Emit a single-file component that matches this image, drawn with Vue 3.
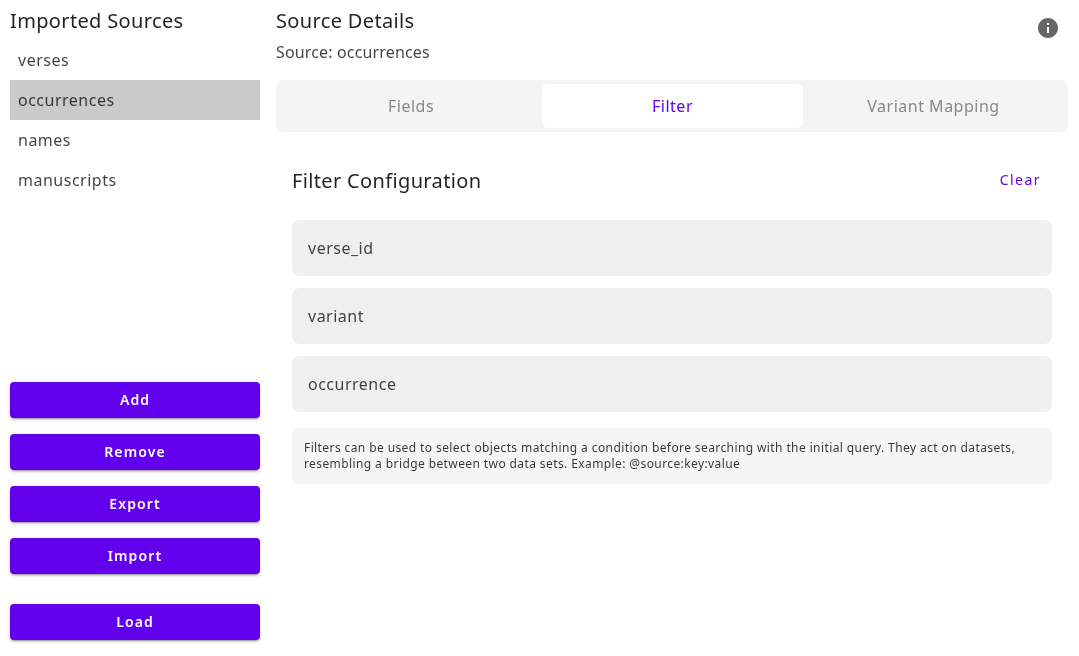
<script setup>
const sources = ['verses', 'occurrences', 'names', 'manuscripts']
const tabs = ['Fields', 'Filter', 'Variant Mapping']
const fields = ['verse_id', 'variant', 'occurrence']
const actions = ['Add', 'Remove', 'Export', 'Import']
</script>

<template>
  <div class="app">
    <aside class="side">
      <h2 class="title">Imported Sources</h2>
      <ul class="list">
        <li v-for="s in sources" :key="s" class="item" :class="{ selected: s === 'occurrences' }">{{ s }}</li>
      </ul>
      <div class="actions">
        <button v-for="a in actions" :key="a" class="btn">{{ a }}</button>
      </div>
      <button class="btn load">Load</button>
    </aside>
    <main class="main">
      <div class="head">
        <div>
          <h2 class="title">Source Details</h2>
          <div class="sub">Source: occurrences</div>
        </div>
        <svg class="info" viewBox="0 0 24 24" width="24" height="24">
          <path fill="#666" d="M12 2C6.48 2 2 6.48 2 12s4.48 10 10 10 10-4.48 10-10S17.52 2 12 2zm1 15h-2v-6h2v6zm0-8h-2V7h2v2z" />
        </svg>
      </div>
      <div class="tabs">
        <div v-for="t in tabs" :key="t" class="tab" :class="{ active: t === 'Filter' }">{{ t }}</div>
      </div>
      <section class="panel">
        <div class="panel-head">
          <h2 class="title">Filter Configuration</h2>
          <span class="clear">Clear</span>
        </div>
        <div class="rows">
          <div v-for="f in fields" :key="f" class="row">{{ f }}</div>
        </div>
        <p class="note">Filters can be used to select objects matching a condition before searching with the initial query. They act on datasets, resembling a bridge between two data sets. Example: @source:key:value</p>
      </section>
    </main>
  </div>
</template>

<style>
html, body { margin: 0; background: #fff; }
</style>

<style scoped>
.app {
  display: flex;
  height: 656px;
  box-sizing: border-box;
  padding: 0 11px 0 10px;
  gap: 16px;
  font-family: "Noto Sans", sans-serif;
  color: rgba(0, 0, 0, 0.87);
  overflow: hidden;
  will-change: transform;
}
.side {
  width: 250px;
  flex: none;
  display: flex;
  flex-direction: column;
  padding: 5px 0 16px;
  box-sizing: border-box;
}
.title {
  margin: 0;
  font-size: 20px;
  font-weight: 400;
  line-height: 32px;
  letter-spacing: 0.35px;
}
.list {
  list-style: none;
  margin: 3px 0 0;
  padding: 0;
}
.item {
  height: 40px;
  line-height: 40px;
  padding-left: 8px;
  font-size: 16px;
  letter-spacing: 0.5px;
  color: rgba(0, 0, 0, 0.74);
}
.item.selected { background: #cacaca; }
.actions {
  margin-top: auto;
  display: flex;
  flex-direction: column;
  gap: 16px;
}
.btn {
  display: block;
  width: 100%;
  height: 36px;
  border: 0;
  border-radius: 4px;
  background: #6200ee;
  color: #fff;
  font-family: inherit;
  font-size: 14px;
  font-weight: 600;
  letter-spacing: 1.1px;
  padding: 0 0 2px;
  box-shadow: 0 3px 1px -2px rgba(0,0,0,.2), 0 2px 2px 0 rgba(0,0,0,.14), 0 1px 5px 0 rgba(0,0,0,.12);
}
.load { margin-top: 30px; }
.main { flex: 1; min-width: 0; padding-top: 5px; }
.head { display: flex; justify-content: space-between; }
.sub {
  font-size: 16px;
  line-height: 20px;
  letter-spacing: 0.15px;
  margin-top: 5px;
  color: rgba(0, 0, 0, 0.74);
}
.info { margin: 11px 8px 0 0; }
.tabs {
  margin-top: 18px;
  height: 52px;
  box-sizing: border-box;
  padding: 4px;
  display: grid;
  grid-template-columns: 262px 261px 261px;
  background: #f4f4f4;
  border-radius: 8px;
}
.tab {
  display: flex;
  align-items: center;
  justify-content: center;
  border-radius: 6px;
  font-size: 16px;
  letter-spacing: 0.5px;
  color: #888;
}
.tab.active { background: #fff; color: #6200ee; }
.panel { padding: 33px 16px 0; }
.panel-head {
  display: flex;
  justify-content: space-between;
  align-items: center;
  padding-right: 11px;
}
.clear {
  color: #6200ee;
  font-size: 14px;
  font-weight: 400;
  letter-spacing: 1.45px;
  margin-top: -4px;
}
.rows {
  margin-top: 23px;
  display: flex;
  flex-direction: column;
  gap: 12px;
}
.row {
  height: 56px;
  line-height: 56px;
  padding-left: 16px;
  background: #efefef;
  border-radius: 8px;
  font-size: 16px;
  letter-spacing: 0.5px;
  color: rgba(0, 0, 0, 0.74);
}
.note {
  margin: 16px 0 0;
  padding: 12px;
  height: 56px;
  box-sizing: border-box;
  background: #f5f5f5;
  border-radius: 8px;
  font-size: 12px;
  line-height: 16px;
  letter-spacing: 0.4px;
  color: rgba(0, 0, 0, 0.78);
}
</style>
